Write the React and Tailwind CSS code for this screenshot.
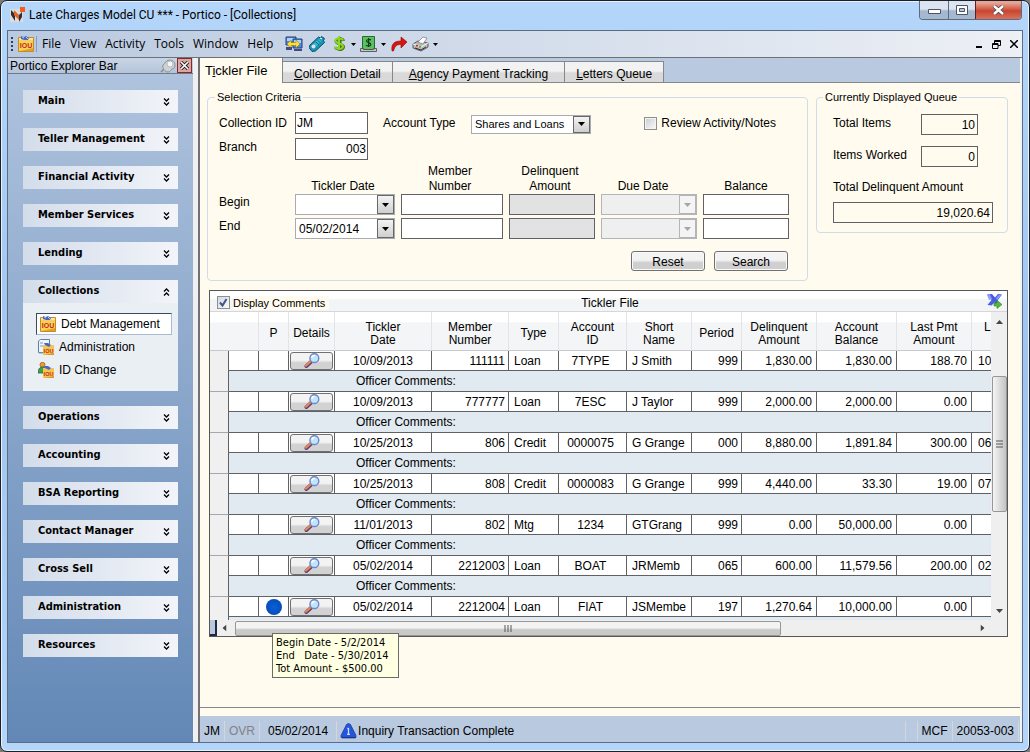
import React from "react";

const sections = [
  "Main", "Teller Management", "Financial Activity", "Member Services", "Lending", "Collections",
  "Operations", "Accounting", "BSA Reporting", "Contact Manager", "Cross Sell", "Administration", "Resources",
];

const rows = [
  ["10/09/2013", "111111", "Loan", "7TYPE", "J Smith", "999", "1,830.00", "1,830.00", "188.70", "10"],
  ["10/09/2013", "777777", "Loan", "7ESC", "J Taylor", "999", "2,000.00", "2,000.00", "0.00", ""],
  ["10/25/2013", "806", "Credit", "0000075", "G Grange", "000", "8,880.00", "1,891.84", "300.00", "06"],
  ["10/25/2013", "808", "Credit", "0000083", "G Grange", "999", "4,440.00", "33.30", "19.00", "07"],
  ["11/01/2013", "802", "Mtg", "1234", "GTGrang", "999", "0.00", "50,000.00", "0.00", ""],
  ["05/02/2014", "2212003", "Loan", "BOAT", "JRMemb", "065", "600.00", "11,579.56", "200.00", "02"],
  ["05/02/2014", "2212004", "Loan", "FIAT", "JSMembe", "197", "1,270.64", "10,000.00", "0.00", ""],
];

const align = [
  "text-center", "text-right pr-[3px]", "text-left pl-[5px]", "text-center pr-1", "text-left pl-[5px]",
  "text-right pr-[3px]", "text-right pr-1", "text-right pr-1", "text-right pr-1", "text-left pl-[6px]",
];

const headings = [
  ["P"], ["Details"], ["Tickler", "Date"], ["Member", "Number"], ["Type"], ["Account", "ID"], ["Short", "Name"],
  ["Period"], ["Delinquent", "Amount"], ["Account", "Balance"], ["Last Pmt", "Amount"], ["L", ""],
];

function Iou({ className = "size-4" }) {
  return (
    <svg viewBox="0 0 16 16" className={className} aria-hidden="true">
      <path d="M.5 1.500h15v14H.5z" fill="#f9cf5c" stroke="#c98a20" />
      <path d="M15 4v11H2l13-3z" fill="#e0a02c" />
      <path d="M1 2h14v2H1z" fill="#fbe59c" />
      <path d="M3 0l3 1 2-1 3 2-1 2-4 0-3-1z" fill="#4a68c0" />
      <path d="M4 1l2 1M8 1l2 2" stroke="#b8c8f0" />
      <text x="8" y="12" textAnchor="middle" fontSize="7" fontWeight="bold" fontFamily="Liberation Sans, sans-serif" fill="#c42a14">IOU</text>
    </svg>
  );
}

function IouPage() {
  return (
    <svg viewBox="0 0 16 16" className="size-4" aria-hidden="true">
      <path d="M2.500 .5h9v13H.5V2z" fill="#eef4fb" stroke="#5f7f9f" />
      <path d="M1 14h6M2 4h3M2 7h3" stroke="#6f9fd0" />
      <path d="M5 6h11v10H5z" fill="#f6c453" />
      <path d="M16 7v9H6l10-2z" fill="#d8962a" />
      <path d="M6 4l4 0 3 2-2 2-4-2z" fill="#4a68c0" />
      <text x="10.500" y="13.500" textAnchor="middle" fontSize="5.500" fontWeight="bold" fontFamily="Liberation Sans, sans-serif" fill="#c42a14">IOU</text>
    </svg>
  );
}

function IouPeople() {
  return (
    <svg viewBox="0 0 16 16" className="size-4" aria-hidden="true">
      <circle cx="4.500" cy="2.800" r="2.500" fill="#f09a3a" stroke="#a65a14" strokeWidth=".8" />
      <path d="M0 11c0-4 2-6 4.500-6S9 7 9 11z" fill="#38a050" stroke="#1d6a34" strokeWidth=".8" />
      <path d="M5 6h11v10H5z" fill="#f6c453" />
      <path d="M16 7v9H6l10-2z" fill="#d8962a" />
      <path d="M6 4l4 0 3 2-2 2-4-2z" fill="#4a68c0" />
      <text x="10.500" y="13.500" textAnchor="middle" fontSize="5.500" fontWeight="bold" fontFamily="Liberation Sans, sans-serif" fill="#c42a14">IOU</text>
    </svg>
  );
}

function Logo() {
  return (
    <svg viewBox="0 0 16 16" className="size-4" aria-hidden="true">
      <path d="M1 2h13v13H1z" fill="#dcdcdc" />
      <path d="M2 3l4 4v7L2 8z" fill="#303030" />
      <path d="M5 3l5 5v5L5 8z" fill="#e0662e" />
      <path d="M10 8l3-3v5l-3 5z" fill="#303030" />
      <path d="M11 0h5v5h-5z" fill="#ff5a12" />
    </svg>
  );
}

function Monitors() {
  return (
    <svg viewBox="0 0 18 16" className="h-4 w-[18px]" aria-hidden="true">
      <path d="M1 1h10v8H1z" fill="#4f86e8" stroke="#27406f" />
      <path d="M2 2h8v3H2z" fill="#a8d4ff" />
      <path d="M8 3h9v9H8z" fill="#4f86e8" stroke="#27406f" />
      <path d="M9 4h7v3H9z" fill="#a8d4ff" />
      <path d="M2 8l4-4v2.500h5V4l4 4-4 4V9.500H6V12z" fill="#ffe030" stroke="#8a7410" strokeWidth=".5" />
      <path d="M1 11h6v3H1zM9 13h8v2H9z" fill="#444a86" />
    </svg>
  );
}

function Phone() {
  return (
    <svg viewBox="0 0 16 16" className="size-4" aria-hidden="true">
      <path d="M.5 9.500l9-8.500 2 1 1-1.500 3 2-1 2 1 2-9 8.500-3.500.500-3-4z" fill="#1496b4" stroke="#0a4f66" />
      <path d="M4 8.500l6-5.500 2.500 2.500-6 5.500z" fill="#3cb6d2" />
      <circle cx="4.500" cy="10.500" r="2" fill="#e9dcf5" />
      <path d="M7 6l3 3M9 4.500l2.500 2.500" stroke="#0b6780" />
      <path d="M11 2l2 1" stroke="#fff" />
    </svg>
  );
}

function Dollar() {
  return (
    <svg viewBox="0 0 12 16" className="h-4 w-3" fill="none" aria-hidden="true">
      <path d="M10.500 5C10 2.500 3 2 3 5.200S10.500 7.500 10.500 11 3 13.500 2.500 11M7 1v14" stroke="#4c6b1c" strokeWidth="3" />
      <path d="M10 4.500C9.500 2 2.500 1.500 2.500 4.700S10 7 10 10.500 2.500 13 2 10.500M6 0v14" stroke="#8bd824" strokeWidth="2" />
    </svg>
  );
}

function Bill() {
  return (
    <svg viewBox="0 0 17 16" className="h-4 w-[17px]" aria-hidden="true">
      <path d="M2.500 .5h12v13h-12z" fill="#5cc062" stroke="#276b33" />
      <path d="M11 4.200C10 3 6.500 3.200 6.500 5S10.800 6.500 10.800 8.500 7 10.500 6 9M8.600 2v9" fill="none" stroke="#123f1c" strokeWidth="1.200" />
      <path d="M.5 12.500h3v1h10v-1h3v3H.5z" fill="#c6c6c6" stroke="#444" strokeWidth=".8" />
    </svg>
  );
}

function RedArrow() {
  return (
    <svg viewBox="0 0 17 16" className="h-4 w-[17px]" aria-hidden="true">
      <path d="M1 15c-1-7 2-10 9-10V1l6 5-6 6V8.500c-4 0-6 1-7.500 6.500z" fill="#d8150f" stroke="#8a0a08" strokeWidth=".6" />
    </svg>
  );
}

function Printer() {
  return (
    <svg viewBox="0 0 17 16" className="h-4 w-[17px]" aria-hidden="true">
      <path d="M1 8l5-3 10 2v4l-7 4-8-3z" fill="#b9b9b9" stroke="#444" strokeWidth=".8" />
      <path d="M1 8l8 3 7-4" fill="none" stroke="#f5f5f5" />
      <path d="M6 6l5-5 4 1-4 6z" fill="#fff" stroke="#777" strokeWidth=".7" />
      <path d="M4 9h2v1.500H4z" fill="#e02a2a" />
      <path d="M7 10h2v1.500H7z" fill="#3bb33b" />
      <path d="M3 12l6 2 5-3" fill="none" stroke="#333" />
    </svg>
  );
}

function Pin() {
  return (
    <svg viewBox="0 0 16 14" className="h-[14px] w-4" aria-hidden="true">
      <path d="M1 13l4-4" stroke="#8a8a8a" strokeWidth="1.500" />
      <path d="M3 6c2-1 3-5 6-5 4 0 6 2 6 5s-2 4-3 4-1 3-4 3-6-4-5-7z" fill="#d0d3d6" stroke="#85898e" strokeWidth=".9" />
      <circle cx="10" cy="5" r="3" fill="#f4f5f6" stroke="#a3a7ab" strokeWidth=".7" />
    </svg>
  );
}

function Magnifier() {
  return (
    <svg viewBox="0 0 16 16" className="h-[15px] w-4" aria-hidden="true">
      <path d="M2 14L8 8.500" stroke="#5d3a86" strokeWidth="4" strokeLinecap="round" />
      <path d="M1.500 13.500L7 8.500" stroke="#f08a3c" strokeWidth="2.200" strokeLinecap="round" />
      <circle cx="10.500" cy="5.500" r="4.700" fill="#bfe6fa" stroke="#6f86c4" strokeWidth="1.500" />
      <path d="M8 5c0-1.500 1-2.500 3-2.500" stroke="#fff" strokeWidth="1.500" fill="none" />
    </svg>
  );
}

function ExportIcon() {
  return (
    <svg viewBox="0 0 17 16" className="h-4 w-[17px]" aria-hidden="true">
      <path d="M1 1.500l5-.5 3 3.500L12 1l4 .5-4.500 6 3 4-4 1-2-3-3 3-4-.500 4-5z" fill="#4a5be4" />
      <path d="M1 2l3 0 2 4-3 1zM10 5l3-3 2 0-4 5z" fill="#8fa0fa" />
      <path d="M8 10h3V7.500l5 4-5 4v-2.500H8z" fill="#52b83a" stroke="#2f8420" strokeWidth=".6" />
    </svg>
  );
}

function Alert() {
  return (
    <svg viewBox="0 0 17 16" className="h-4 w-[17px]" aria-hidden="true">
      <path d="M6.500 1.500Q8.500-.5 10.500 1.500L16 12.500v2H1v-2z" fill="#2456dc" stroke="#1338a0" strokeWidth=".7" />
      <path d="M2 14.800h13.500" stroke="#0e2a7c" />
      <path d="M8.500 5v6M7.300 5.500h1.200M7 11.300h3" stroke="#cfdcff" strokeWidth="1.300" />
    </svg>
  );
}

function Chevrons({ up }) {
  return (
    <svg viewBox="0 0 7 8" className={up ? "h-2 w-[7px] rotate-180" : "h-2 w-[7px]"} fill="none" stroke="#000" strokeWidth="1.300" aria-hidden="true">
      <path d="M1 .5l2.500 2.500L6 .5M1 4.500l2.500 2.500L6 4.500" />
    </svg>
  );
}

function Caret({ className = "h-1 w-[7px] text-black" }) {
  return (
    <svg viewBox="0 0 7 4" className={className} fill="currentColor" aria-hidden="true">
      <path d="M0 0h7L3.500 4z" />
    </svg>
  );
}

function Combo({ label, value = "", disabled, className = "" }) {
  return (
    <div className={`relative ${className}`}>
      <select
        aria-label={label}
        disabled={disabled}
        defaultValue={value}
        className={`block size-full appearance-none border pl-[3px] pr-5 ${disabled ? "border-[#b3b5b8] bg-[#efefef]" : "border-[#a9abb0] bg-white"}`}
      >
        <option>{value}</option>
      </select>
      <span
        className={`pointer-events-none absolute inset-y-px right-px flex w-[17px] items-center justify-center border ${
          disabled ? "border-[#b3b5b8] bg-[#f4f4f4]" : "border-[#66686c] bg-linear-to-b from-[#f3f3f3] to-[#cfcfcf]"
        }`}
      >
        <Caret className={disabled ? "h-1 w-[7px] text-[#a5a5a5]" : "h-1 w-[7px] text-black"} />
      </span>
    </div>
  );
}

const field = "block h-[21px] w-full border border-[#606164] px-0.5";

function TitleBar() {
  return (
    <header className="flex h-[29px] items-start justify-between pl-2">
      <div className="flex items-center gap-1 pt-1.5 font-[Roboto,sans-serif] text-[12px] leading-4">
        <Logo />
        <h1>Late Charges Model CU *** - Portico - [Collections]</h1>
      </div>
      <div className="mr-[7px] flex h-[19px] overflow-hidden rounded-b-[4px] border border-t-0 border-[#5c6b80]">
        <button aria-label="Minimize" className="flex w-7 items-center justify-center bg-linear-to-b from-[#dbe4f0] from-45% to-[#a5b8d0] to-55%">
          <svg viewBox="0 0 13 6" className="mt-1 h-1.5 w-[13px]"><path d="M.5 .5h12v4H.5z" fill="#fff" stroke="#4c5566" /></svg>
        </button>
        <button aria-label="Maximize" className="flex w-[27px] items-center justify-center border-l border-[#5c6b80] bg-linear-to-b from-[#dbe4f0] from-45% to-[#a5b8d0] to-55%">
          <svg viewBox="0 0 12 10" className="h-2.5 w-3"><path d="M.5 .5h11v9H.5z" fill="#fff" stroke="#4c5566" /><path d="M3.500 3.500h5v3h-5z" fill="#b9c8dc" stroke="#4c5566" /></svg>
        </button>
        <button aria-label="Close" className="flex w-[46px] items-center justify-center border-l border-[#5c2020] bg-linear-to-b from-[#e8a595] from-10% via-[#c8452f] via-55% to-[#d8705a]">
          <svg viewBox="0 0 13 10" className="h-2.5 w-[13px]"><path d="M2 1l9 8M11 1L2 9" stroke="#4c4a55" strokeWidth="4" /><path d="M2 1l9 8M11 1L2 9" stroke="#fff" strokeWidth="2.400" /></svg>
        </button>
      </div>
    </header>
  );
}

function MenuBar() {
  return (
    <nav className="flex h-[27px] items-center border-b border-[#6e7176] bg-linear-to-r from-[#b9c9e0] to-[#edf0f5] pl-[3px] pr-1 font-['Open_Sans',sans-serif] text-[12px]">
      <svg viewBox="0 0 2 14" className="mr-[5px] h-3.5 w-0.5" aria-hidden="true"><path d="M1 0v14" stroke="#2b3f66" strokeWidth="2" strokeDasharray="2 2" /></svg>
      <Iou />
      <div className="ml-0.5 flex gap-[9px] border-l border-[#7fa0cc] pl-[5px] leading-4">
        {["File", "View", "Activity", "Tools", "Window", "Help"].map((m) => <button key={m}>{m}</button>)}
      </div>
      <div className="ml-3 flex items-center">
        <button aria-label="Connect" className="mr-1.5"><Monitors /></button>
        <button aria-label="Phone" className="mr-2"><Phone /></button>
        <button aria-label="Cash" className="flex items-center gap-1.5"><Dollar /><Caret className="h-[3px] w-[5px]" /></button>
        <button aria-label="Payments" className="ml-1 flex items-center gap-1"><Bill /><Caret className="h-[3px] w-[5px]" /></button>
        <button aria-label="Forward" className="ml-[5px] mr-1"><RedArrow /></button>
        <button aria-label="Print" className="flex items-center gap-1"><Printer /><Caret className="h-[3px] w-[5px]" /></button>
      </div>
      <div className="ml-auto flex items-center gap-[9px]">
        <button aria-label="Minimize document"><svg viewBox="0 0 8 8" className="size-2"><path d="M1 7h6" stroke="#000" strokeWidth="2" /></svg></button>
        <button aria-label="Restore document"><svg viewBox="0 0 9 9" className="size-[9px]" fill="none" stroke="#000"><path d="M2.500 3V.5h6v5H6M2.500 1.500h6M.5 3.500h5.500v5H.5zM.5 4.500H6" /></svg></button>
        <button aria-label="Close document"><svg viewBox="0 0 8 8" className="size-2" stroke="#000" strokeWidth="1.500"><path d="M0 0l8 8M8 0L0 8" /></svg></button>
      </div>
    </nav>
  );
}

function Explorer() {
  const links = [["Debt Management", Iou], ["Administration", IouPage], ["ID Change", IouPeople]];
  return (
    <aside className="flex w-[185px] shrink-0 flex-col bg-linear-to-b from-[#b0c4de] to-[#6388b6]">
      <div className="flex h-4 items-center border-b border-[#6e7a8c] bg-linear-to-b from-[#c9d5e6] to-[#b4c4da] pl-0.5 pr-px text-[12px] leading-4">
        <h2 className="flex-1">Portico Explorer Bar</h2>
        <Pin />
        <button aria-label="Close explorer bar" className="ml-px flex size-[15px] items-center justify-center border border-[#7a2c34] bg-[#e2a39d]">
          <svg viewBox="0 0 9 9" className="size-[9px]"><path d="M1 1l7 7M8 1L1 8" stroke="#222" strokeWidth="3.400" /><path d="M1 1l7 7M8 1L1 8" stroke="#fff" strokeWidth="1.600" /></svg>
        </button>
      </div>
      <div className="flex flex-col gap-[15px] px-[15px] py-4">
        {sections.map((s) => (
          <section key={s}>
            <button className="flex h-[23px] w-full items-center justify-between bg-linear-to-r from-[#d3ddea] to-[#f2f4f9] pl-[15px] pr-2 text-left font-['DejaVu_Sans_Condensed','DejaVu_Sans',sans-serif] text-[11px] font-bold">
              {s}
              <Chevrons up={s === "Collections"} />
            </button>
            {s === "Collections" && (
              <ul className="flex h-[88px] flex-col gap-px bg-[#eaeff4] px-[13px] pr-[6px] pt-[10px] text-[12px]">
                {links.map(([name, Icon], i) => (
                  <li key={name}>
                    <a href="#" className={`flex h-[22px] items-center gap-[5px] ${i === 0 ? "border border-[#a9bad2] border-l-[#3a4a66] border-t-[#3a4a66] bg-white pl-[3px]" : "pl-[2px]"}`}>
                      <Icon />
                      {name}
                    </a>
                  </li>
                ))}
              </ul>
            )}
          </section>
        ))}
      </div>
    </aside>
  );
}

function Tabs() {
  const tab = "flex h-[21px] items-center border border-b-0 border-[#84878c] bg-linear-to-b from-[#f2f2f2] from-45% to-[#d9d9d9] to-55% pt-[3px]";
  return (
    <div role="tablist" className="flex h-[25px] items-end border-b border-[#84878c] bg-[#b9c9df] text-[12px]">
      <button role="tab" aria-selected="true" className="-mb-px flex h-[25px] w-[83px] items-center border-r border-[#84878c] bg-[#fffbee] px-[5px] text-[13px]">
        <span>T<u>i</u>ckler File</span>
      </button>
      <button role="tab" className={`${tab} border-l-0 px-[11px]`}><span><u>C</u>ollection Detail</span></button>
      <button role="tab" className={`${tab} border-l-0 px-[16px]`}><span><u>A</u>gency Payment Tracking</span></button>
      <button role="tab" className={`${tab} border-l-0 px-[11px]`}><span><u>L</u>etters Queue</span></button>
    </div>
  );
}

function Criteria() {
  const button = "h-5 w-[74px] rounded-[3px] border border-[#707070] bg-linear-to-b from-[#f3f3f3] from-45% to-[#cfcfcf] to-60% pt-px leading-4 shadow-[inset_0_0_0_1px_#fafafa]";
  const head = "text-center leading-[15px]";
  const columns = "grid grid-cols-[70px_100px_102px_86px_96px_86px] gap-x-1.5";
  return (
    <fieldset className="min-w-0 flex-1 rounded-[4px] border border-[#d0dce8] pb-[9px] pl-[11px] pr-[19px]">
      <legend className="-ml-1 px-0.5 text-[11px] leading-[14px]">Selection Criteria</legend>
      <div className="mt-2 flex h-[22px] items-center">
        <label htmlFor="cid" className="w-[76px] shrink-0">Collection ID</label>
        <input id="cid" defaultValue="JM" className="h-[22px] w-[73px] border border-[#606164] bg-white px-px" />
        <span className="ml-[15px] w-[88px]">Account Type</span>
        <Combo label="Account Type" value="Shares and Loans" className="mt-0.5 h-[19px] w-[120px] text-[11px]" />
        <label className="ml-auto mr-[12px] flex items-center gap-1">
          <input type="checkbox" className="size-[13px] appearance-none border border-[#8e8f8f] bg-linear-to-br from-[#c9ccd1] to-[#fbfbfb] shadow-[inset_0_0_0_1px_#f4f4f4]" />
          Review Activity/Notes
        </label>
      </div>
      <div className="mt-1 flex h-[22px] items-center">
        <label htmlFor="branch" className="w-[76px] shrink-0 pb-1">Branch</label>
        <input id="branch" defaultValue="003" className="h-[22px] w-[73px] border border-[#606164] bg-white px-px text-right" />
      </div>
      <div className={`${columns} mt-1 items-end`}>
        <span />
        <span className={`${head} pr-1`}>Tickler Date</span>
        <span className={`${head} pr-1`}>Member<br />Number</span>
        <span className={`${head} pr-1`}>Delinquent<br />Amount</span>
        <span className={`${head} pr-3`}>Due Date</span>
        <span className={head}>Balance</span>
      </div>
      <div className={`${columns} gap-y-[3px]`}>
        {["Begin", "End"].map((r) => (
          <React.Fragment key={r}>
            <span className="leading-4">{r}</span>
            <Combo label={`${r} tickler date`} value={r === "End" ? "05/02/2014" : ""} className="h-[21px]" />
            <input aria-label={`${r} member number`} className={`${field} bg-white`} />
            <input aria-label={`${r} delinquent amount`} disabled className={`${field} bg-[#e2e2e2]`} />
            <Combo label={`${r} due date`} disabled className="h-[21px]" />
            <input aria-label={`${r} balance`} className={`${field} bg-white`} />
          </React.Fragment>
        ))}
      </div>
      <div className="mt-3 flex justify-end gap-[9px]">
        <button className={button}>Reset</button>
        <button className={button}>Search</button>
      </div>
    </fieldset>
  );
}

function Queue() {
  const box = "h-[21px] border border-[#606164] bg-transparent px-0.5 text-right";
  return (
    <fieldset className="w-[192px] shrink-0 rounded-[4px] border border-[#d0dce8] pb-[9px] pl-[16px] pr-[14px]">
      <legend className="-ml-[10px] px-0.5 text-[11px] leading-[14px]">Currently Displayed Queue</legend>
      <div className="mt-[10px] flex items-start">
        <label htmlFor="ti" className="w-[88px] leading-[18px]">Total Items</label>
        <input id="ti" readOnly value="10" className={`${box} w-[57px]`} />
      </div>
      <div className="mt-[11px] flex items-start">
        <label htmlFor="iw" className="w-[88px] leading-[18px]">Items Worked</label>
        <input id="iw" readOnly value="0" className={`${box} w-[57px]`} />
      </div>
      <label htmlFor="tda" className="mt-[11px] block leading-[18px]">Total Delinquent Amount</label>
      <input id="tda" readOnly value="19,020.64" className={`${box} mt-1.5 block w-full`} />
    </fieldset>
  );
}

function TicklerGrid() {
  const th = "border-b border-r border-b-[#c6c9cd] border-r-[#e2e4e7] bg-linear-to-b from-white from-25% to-[#f4f5f7] to-30% px-0 pb-0 pt-[5px] text-center font-normal leading-[13px]";
  const cell = "h-5 border-b border-r border-[#606164] bg-white py-0 leading-4";
  return (
    <section className="relative border border-[#55575b] bg-white text-[12px]">
      <div className="flex h-[21px] items-center border-b border-[#d5d7da] bg-linear-to-b from-white from-35% to-[#f3f4f6] to-45%">
        <label className="flex flex-1 items-center gap-[3px] pl-[7px] pt-[3px] text-[11px] leading-[14px]">
          <span className="grid">
            <input type="checkbox" defaultChecked className="col-start-1 row-start-1 size-[13px] appearance-none border border-[#8e8f8f] bg-linear-to-br from-[#d4d8de] to-[#fbfbfb]" />
            <svg viewBox="0 0 13 13" className="pointer-events-none col-start-1 row-start-1 size-[13px]" fill="none" aria-hidden="true"><path d="M3 6.500l2.500 3L9.500 3" stroke="#3c5590" strokeWidth="2" /></svg>
          </span>
          <span className="bg-[#fffbee] pr-1">Display Comments</span>
        </label>
        <h2 className="pt-[3px]">Tickler File</h2>
        <div className="flex flex-1 justify-end pr-1"><button aria-label="Export"><ExportIcon /></button></div>
      </div>
      <div className="flex h-[308px]">
        <div className="min-w-0 flex-1 overflow-hidden">
          <table className="w-full min-w-[802px] table-fixed border-separate border-spacing-0">
            <colgroup>
              <col className="w-[19px]" /><col className="w-[30px]" /><col className="w-[30px]" /><col className="w-[46px]" />
              <col className="w-[97px]" /><col className="w-[77px]" /><col className="w-[50px]" /><col className="w-[68px]" />
              <col className="w-[65px]" /><col className="w-[50px]" /><col className="w-[75px]" /><col className="w-[80px]" />
              <col className="w-[75px]" /><col />
            </colgroup>
            <thead>
              <tr className="h-[39px]">
                <th colSpan={2} className={th} aria-label="Row" />
                {headings.map((h, i) => (
                  <th key={i} scope="col" className={i === 11 ? `${th} pl-3 !text-left` : th}>
                    {h[0]}{h.length > 1 && <br />}{h[1] || (i === 11 ? "\u00a0" : "")}
                  </th>
                ))}
              </tr>
            </thead>
            <tbody>
              {rows.map((r, n) => (
                <React.Fragment key={n}>
                  <tr>
                    <th rowSpan={2} aria-label={`Row ${n + 1}`} className="border-b border-r border-b-[#a5a7aa] border-r-[#606164] bg-[#f0f0f0] p-0" />
                    <td className={`${cell} px-0`} />
                    <td className={`${cell} px-0`}>
                      {n === 6 && <span className="mx-auto block size-4 rounded-full bg-radial from-[#0a5fd8] to-[#0546b0]" />}
                    </td>
                    <td className={`${cell} px-0`}>
                      <button aria-label="Details" className="mx-auto flex h-[18px] w-[43px] items-center justify-center rounded-[3px] border border-[#707070] bg-linear-to-b from-[#f3f3f3] from-45% to-[#d2d2d2] to-60%">
                        <Magnifier />
                      </button>
                    </td>
                    {r.map((v, i) => <td key={i} className={`${cell} px-0 ${align[i]}`}>{v}</td>)}
                  </tr>
                  <tr>
                    <td colSpan={13} className="h-[21px] border-b border-[#606164] bg-[#e1e9f1] py-0 pl-[127px] pr-0 leading-4">
                      {n < rows.length - 1 && "Officer Comments:"}
                    </td>
                  </tr>
                </React.Fragment>
              ))}
            </tbody>
          </table>
        </div>
        <div className="flex w-4 flex-col items-center bg-[#efefef] pb-[7px] pt-2" aria-hidden="true">
          <Caret className="h-1 w-[7px] rotate-180 text-[#444]" />
          <div className="mt-[52px] flex h-[136px] w-[15px] items-center justify-center rounded-[2px] border border-[#979797] bg-linear-to-r from-[#f5f5f5] to-[#c4c4c4]">
            <svg viewBox="0 0 7 8" className="h-2 w-[7px]"><path d="M0 1h7M0 4h7M0 7h7" stroke="#555" /></svg>
          </div>
          <Caret className="mt-auto h-1 w-[7px] text-[#444]" />
        </div>
      </div>
      <div className="flex h-4 items-center bg-[#efefef]" aria-hidden="true">
        <span className="h-full w-[7px] border-b-2 border-r-2 border-[#1f2a3c] bg-[#b9c9df]" />
        <Caret className="ml-1 h-1 w-[7px] rotate-90 text-[#444]" />
        <div className="ml-[7px] flex h-[15px] w-[546px] items-center justify-center rounded-[2px] border border-[#979797] bg-linear-to-b from-[#f3f3f3] from-45% to-[#c9c9c9] to-60%">
          <svg viewBox="0 0 8 7" className="h-[7px] w-2"><path d="M1 0v7M4 0v7M7 0v7" stroke="#555" /></svg>
        </div>
        <Caret className="ml-auto mr-[21px] h-1 w-[7px] -rotate-90 text-[#444]" />
      </div>
      <div role="tooltip" className="absolute left-[62px] top-[342px] z-10 w-[127px] whitespace-pre border border-[#6a6a6a] bg-[#ffffe1] px-[3px] py-0.5 font-['DejaVu_Sans_Condensed','DejaVu_Sans',sans-serif] text-[11px] leading-[13px]">
        {"Begin Date - 5/2/2014\nEnd   Date - 5/30/2014\nTot Amount - $500.00"}
      </div>
    </section>
  );
}

function StatusBar() {
  const item = "border-r border-[#d3d6da] py-0.5";
  return (
    <footer className="flex h-[26px] items-center bg-[#b9c9df] pt-[3px] text-[12px] leading-4">
      <span className={`${item} px-1`}>JM</span>
      <span className={`${item} px-1 text-[#808389]`}>OVR</span>
      <span className={`${item} px-2`}>05/02/2014</span>
      <span className="flex flex-1 items-center gap-px pl-[3px]"><Alert />Inquiry Transaction Complete</span>
      <span className={`${item} mr-[11px] h-5`} />
      <span className={`${item} border-l px-[4px]`}>MCF</span>
      <span className={`${item} mr-px px-1`}>20053-003</span>
    </footer>
  );
}

export default function App() {
  return (
    <div className="min-h-screen bg-[#7a7a7a] font-['Liberation_Sans',Arial,sans-serif] text-[12px] text-black">
      <div className="flex min-h-screen flex-col overflow-hidden rounded-[7px] border border-[#1d2026] bg-linear-to-b from-[#b4d6fa] via-[#a0c4ee] to-[#b4d6fa] shadow-[inset_0_0_0_1px_#e6f2ff]">
        <TitleBar />
        <div className="mx-1.5 mb-2 flex flex-1 flex-col border border-[#5b6c84] bg-[#f4f4f4]">
          <MenuBar />
          <div className="flex flex-1">
            <Explorer />
            <div className="w-[5px] shrink-0 bg-[#f0f0f0]" />
            <main className="mr-0.5 flex min-w-0 flex-1 flex-col border-l-2 border-[#6f7176] bg-[#fffbee]">
              <Tabs />
              <div className="flex flex-1 flex-col border-b border-[#84878c] pl-[7px] pr-3 pt-[7px]">
                <div className="flex items-start gap-2">
                  <Criteria />
                  <Queue />
                </div>
                <div className="ml-[2px] mt-[9px]"><TicklerGrid /></div>
              </div>
              <div className="h-2 bg-[#fffbee]" />
              <StatusBar />
            </main>
          </div>
        </div>
      </div>
    </div>
  );
}
